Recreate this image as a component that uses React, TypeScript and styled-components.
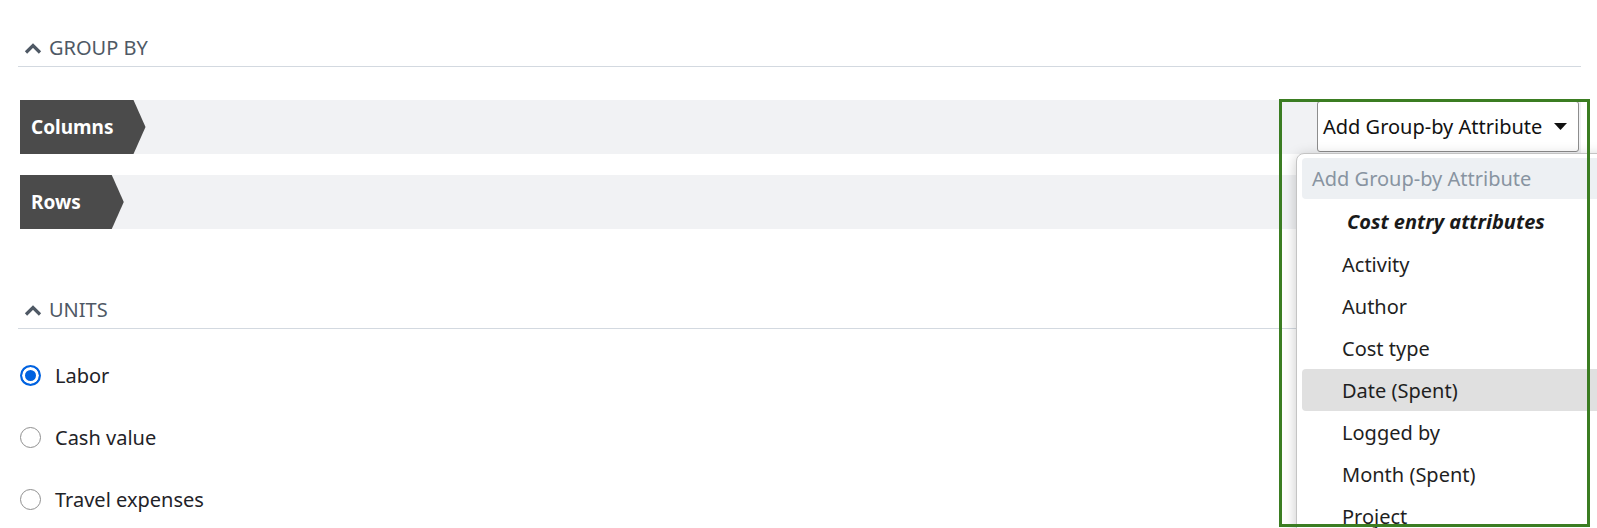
import React from 'react';
import styled, { createGlobalStyle } from 'styled-components';

const GlobalStyle = createGlobalStyle`
  html, body {
    margin: 0;
    padding: 0;
    overflow: hidden;
    background: #ffffff;
  }
  body {
    font-family: "Noto Sans", "Open Sans", sans-serif;
    color: #1f2328;
  }
`;

const attributes = ['Activity', 'Author', 'Cost type', 'Date (Spent)', 'Logged by', 'Month (Spent)', 'Project'];
const units = ['Labor', 'Cash value', 'Travel expenses'];

function Chevron() {
  return (
    <svg width="18" height="11" viewBox="0 0 18 11">
      <polyline points="2,9.5 9,2.5 16,9.5" fill="none" stroke="currentColor" strokeWidth="3.2" />
    </svg>
  );
}

function Caret() {
  return (
    <svg width="13" height="7" viewBox="0 0 13 7">
      <path d="M0 0 L13 0 L6.5 7 Z" fill="#111" />
    </svg>
  );
}

export default function App() {
  return (
    <>
      <GlobalStyle />
      <Page>
        <SectionHeader>
          <Chevron />
          Group by
        </SectionHeader>

        <GroupRows>
          <Bar>
            <BarLabel>Columns</BarLabel>
            <SelectWrap>
              <SelectBox>
                Add Group-by Attribute
                <Caret />
              </SelectBox>
              <Dropdown>
                <Placeholder>Add Group-by Attribute</Placeholder>
                <GroupLabel>Cost entry attributes</GroupLabel>
                {attributes.map((a) => (
                  <Option key={a} $hover={a === 'Date (Spent)'}>
                    {a}
                  </Option>
                ))}
              </Dropdown>
              <Highlight />
            </SelectWrap>
          </Bar>
          <Bar>
            <BarLabel $narrow>Rows</BarLabel>
          </Bar>
        </GroupRows>

        <SectionHeader $spaced>
          <Chevron />
          Units
        </SectionHeader>

        <RadioList>
          {units.map((u, i) => (
            <RadioRow key={u}>
              <Radio $checked={i === 0} />
              {u}
            </RadioRow>
          ))}
        </RadioList>
      </Page>
    </>
  );
}

// Styled Components
const Page = styled.div`
  padding: 0 16px 0 18px;
`;

const SectionHeader = styled.div<{ $spaced?: boolean }>`
  display: flex;
  align-items: center;
  gap: 7px;
  margin-top: ${(p) => (p.$spaced ? '33px' : '0')};
  padding: 35px 0 5px 6px;
  line-height: 26px;
  font-size: 20px;
  text-transform: uppercase;
  color: #4f5965;
  border-bottom: 1px solid #d3d9e0;
`;

const GroupRows = styled.div`
  display: flex;
  flex-direction: column;
  gap: 21px;
  margin-top: 33px;
  margin-left: 2px;
`;

const Bar = styled.div`
  display: flex;
  align-items: flex-start;
  height: 54px;
  background: #f1f2f4;
`;

const BarLabel = styled.div<{ $narrow?: boolean }>`
  height: 54px;
  display: flex;
  align-items: center;
  padding: 0 ${(p) => (p.$narrow ? '43px' : '32px')} 0 11px;
  background: #4b4b4b;
  color: #ffffff;
  font-weight: 700;
  font-size: 19px;
  clip-path: polygon(0 0, calc(100% - 12px) 0, 100% 50%, calc(100% - 12px) 100%, 0 100%);
`;

const SelectWrap = styled.div`
  position: relative;
  margin: 1px 2px 0 auto;
`;

const SelectBox = styled.div`
  box-sizing: border-box;
  width: 262px;
  height: 51px;
  display: flex;
  align-items: center;
  justify-content: space-between;
  padding: 0 11px 0 5px;
  background: #ffffff;
  border: 1px solid #8d8d8d;
  border-radius: 3px;
  font-size: 20px;
  color: #111111;
`;

const Dropdown = styled.div`
  position: absolute;
  top: 52px;
  left: -21px;
  width: 330px;
  box-sizing: border-box;
  padding: 4px 5px;
  background: #ffffff;
  border: 1px solid #c4c4c4;
  border-radius: 8px;
  box-shadow: 0 3px 14px rgba(0, 0, 0, 0.22);
  z-index: 2;
  font-size: 20px;
`;

const Placeholder = styled.div`
  height: 41px;
  display: flex;
  align-items: center;
  padding-left: 10px;
  border-radius: 4px;
  background: #edf0f3;
  color: #8894a1;
`;

const GroupLabel = styled.div`
  height: 44px;
  display: flex;
  align-items: center;
  padding-left: 45px;
  font-weight: 700;
  font-style: italic;
  color: #1a1a1a;
`;

const Option = styled.div<{ $hover?: boolean }>`
  height: 42px;
  display: flex;
  align-items: center;
  padding-left: 40px;
  border-radius: 4px;
  background: ${(p) => (p.$hover ? '#e0e0e0' : 'transparent')};
  color: #1f1f1f;
`;

const Highlight = styled.div`
  position: absolute;
  top: -2px;
  left: -38px;
  width: 311px;
  height: 428px;
  box-sizing: border-box;
  border: 3px solid #3b7d22;
  z-index: 3;
  pointer-events: none;
`;

const RadioList = styled.div`
  display: flex;
  flex-direction: column;
  margin-top: 15px;
  margin-left: 2px;
`;

const RadioRow = styled.label`
  height: 62px;
  display: flex;
  align-items: center;
  gap: 14px;
  font-size: 20px;
  color: #1f2328;
`;

const Radio = styled.span<{ $checked?: boolean }>`
  box-sizing: border-box;
  width: 21px;
  height: 21px;
  border-radius: 50%;
  border: ${(p) => (p.$checked ? '2px solid #0062e0' : '1px solid #8f8f8f')};
  background: ${(p) => (p.$checked ? '#0062e0' : '#ffffff')};
  box-shadow: ${(p) => (p.$checked ? 'inset 0 0 0 3px #ffffff' : 'none')};
`;
